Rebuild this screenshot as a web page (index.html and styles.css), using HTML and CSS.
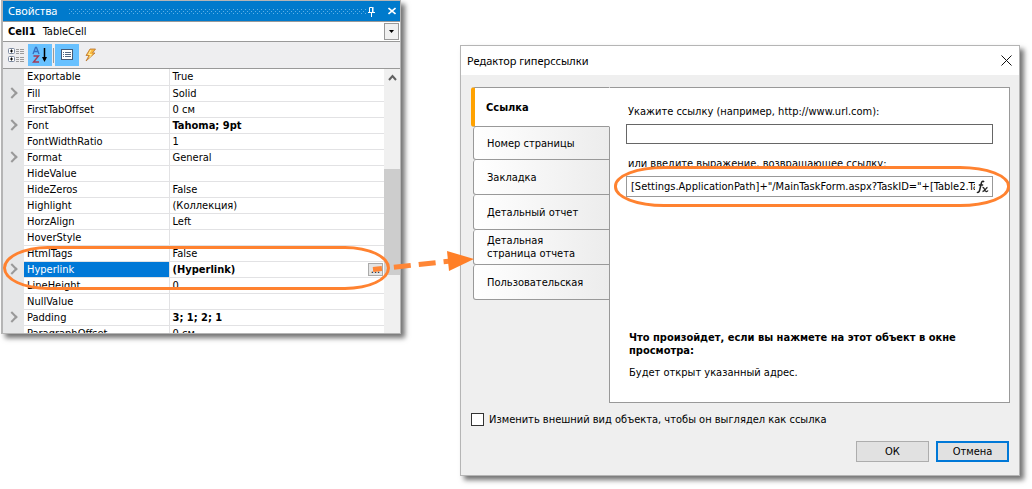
FILE: index.html
```html
<!DOCTYPE html>
<html lang="ru">
<head>
<meta charset="utf-8">
<title>Редактор гиперссылки</title>
<link rel="stylesheet" href="styles.css">
</head>
<body>
<main class="stage">
  <section class="window props">
    <header class="props-title">
      <h2 class="props-name">Свойства</h2>
      <span class="grip"></span>
      <button class="title-btn" aria-label="Закрепить"><svg width="9" height="11" viewBox="0 0 9 11"><path d="M2.500 6V1.500h3V6M6 1v5M1 6.500h7M4.500 7v4" fill="none" stroke="#fff"/></svg></button>
      <button class="title-btn" aria-label="Закрыть"><svg width="8" height="8" viewBox="0 0 8 8"><path d="M.5 1l7 6M7.500 1l-7 6" stroke="#fff" stroke-width="1.600"/></svg></button>
    </header>
    <button class="object-picker" aria-haspopup="listbox">
      <b>Cell1</b><span class="object-type">TableCell</span>
      <span class="drop"><svg width="5" height="3" viewBox="0 0 5 3"><path d="M0 0h5L2.500 3z"/></svg></span>
    </button>
    <div class="toolbar">
      <button class="tool" aria-label="По категориям"><svg width="18" height="18" viewBox="0 0 18 18" fill="none"><rect x="1.500" y="2.500" width="6" height="5" rx="1" fill="#fff" stroke="#7d8aa0"/><path d="M3 5h3M4.500 3.500v3" stroke="#000"/><rect x="1.500" y="10.500" width="6" height="5" rx="1" fill="#fff" stroke="#7d8aa0"/><path d="M3 13h3M4.500 11.500v3" stroke="#000"/><path d="M9 3.500h3M13 3.500h4M9 5.500h3M13 5.500h4M9 7.500h3M13 7.500h4M9 11.500h3M13 11.500h4M9 13.500h3M13 13.500h4M9 15.500h3M13 15.500h4" stroke="#9a9a9a"/></svg></button>
      <button class="tool on" aria-label="По алфавиту"><svg width="18" height="18" viewBox="0 0 18 18" fill="none"><path d="M2 8L4.500 1.500h1L8 8M3 5.500h4" stroke="#356fc0" stroke-width="1.300"/><path d="M2.500 10h5L2.500 16H8" stroke="#a33a55" stroke-width="1.400"/><path d="M13.500 2v12" stroke="#000" stroke-width="1.500"/><path d="M11 11h5l-2.500 5z" fill="#000"/></svg></button>
      <span class="tool-sep"></span>
      <button class="tool on" aria-label="Свойства"><svg width="16" height="16" viewBox="0 0 16 16"><rect x="2.500" y="2.500" width="11" height="10" fill="#fff" stroke="#465a75"/><path d="M4 5.500h1M6 5.500h6M4 7.500h1M6 7.500h6M4 9.500h1M6 9.500h6" stroke="#536984"/></svg></button>
      <button class="tool" aria-label="События"><svg width="16" height="16" viewBox="0 0 16 16"><path d="M7 2h5.500L9.500 6H12l-9 8 3-5.500H3z" fill="#f9b73e" stroke="#b97530" stroke-width=".8"/><path d="M8 3L5.500 7.500h3l-2 3" fill="none" stroke="#fff0a0"/></svg></button>
    </div>
    <div class="grid-view">
      <div class="grid-clip">
        <table class="grid">
          <colgroup><col class="c-mark"><col class="c-name"><col></colgroup>
          <tbody>
            <tr><td></td><th scope="row">Exportable</th><td>True</td></tr>
            <tr class="exp"><td></td><th scope="row">Fill</th><td>Solid</td></tr>
            <tr><td></td><th scope="row">FirstTabOffset</th><td>0 см</td></tr>
            <tr class="exp"><td></td><th scope="row">Font</th><td><b>Tahoma; 9pt</b></td></tr>
            <tr><td></td><th scope="row">FontWidthRatio</th><td>1</td></tr>
            <tr class="exp"><td></td><th scope="row">Format</th><td>General</td></tr>
            <tr><td></td><th scope="row">HideValue</th><td></td></tr>
            <tr><td></td><th scope="row">HideZeros</th><td>False</td></tr>
            <tr><td></td><th scope="row">Highlight</th><td>(Коллекция)</td></tr>
            <tr><td></td><th scope="row">HorzAlign</th><td>Left</td></tr>
            <tr><td></td><th scope="row">HoverStyle</th><td></td></tr>
            <tr><td></td><th scope="row">HtmlTags</th><td>False</td></tr>
            <tr class="exp selected"><td></td><th scope="row">Hyperlink</th><td><div class="edit-cell"><b>(Hyperlink)</b><button class="more">...</button></div></td></tr>
            <tr><td></td><th scope="row">LineHeight</th><td>0</td></tr>
            <tr><td></td><th scope="row">NullValue</th><td></td></tr>
            <tr class="exp"><td></td><th scope="row">Padding</th><td><b>3; 1; 2; 1</b></td></tr>
            <tr><td></td><th scope="row">ParagraphOffset</th><td>0 см</td></tr>
          </tbody>
        </table>
      </div>
      <div class="scrollbar"><svg width="9" height="7" viewBox="0 0 9 7"><path d="M1 6l3.500-4L8 6" fill="none" stroke="#606060" stroke-width="2"/></svg><span class="thumb"></span></div>
      <span class="ring ring-row"></span>
    </div>
    <svg class="arrow" width="104" height="28" viewBox="0 0 104 28"><path d="M2 20.500L80 12" stroke="#ff8636" stroke-width="5" stroke-dasharray="9 12 17 8 17 8 12"/><path d="M76 2l27 8-25 12z" fill="#ff7f27"/></svg>
  </section>

  <section class="window dialog">
    <header class="dialog-title">
      <h2 class="dialog-name">Редактор гиперссылки</h2>
      <button class="close" aria-label="Закрыть"><svg width="11" height="11" viewBox="0 0 11 11"><path d="M.5.5l10 10M10.500.5l-10 10" stroke="#111"/></svg></button>
    </header>
    <div class="dialog-body">
      <div class="pages">
        <nav class="tabs" role="tablist">
          <button class="tab active" role="tab" aria-selected="true">Ссылка</button>
          <button class="tab" role="tab">Номер страницы</button>
          <button class="tab" role="tab">Закладка</button>
          <button class="tab" role="tab">Детальный отчет</button>
          <button class="tab" role="tab">Детальная<br>страница отчета</button>
          <button class="tab" role="tab">Пользовательская</button>
        </nav>
        <div class="panel">
          <label class="label" for="url">Укажите ссылку (например, http://www.url.com):</label>
          <input class="url" id="url" type="text">
          <label class="label label-expr" for="expr">или введите выражение, возвращающее ссылку:</label>
          <div class="expr-box">
            <input class="expr" id="expr" type="text" value="[Settings.ApplicationPath]+&quot;/MainTaskForm.aspx?TaskID=&quot;+[Table2.TaskID]">
            <button class="fx" aria-label="Выражение"><svg width="13" height="14" viewBox="0 0 13 14" fill="none" stroke="#222"><path d="M8 2C6.500 0 5.500 2 5 4.500L3.700 10C3.300 12 2 13 1 12M2.800 5h4.400" stroke-width="1.500"/><path d="M6.500 7.500c2-.5 2 3.500 3.500 4 .8.200 1.500-.2 2-1M11.500 7.500c-1.500 0-2.500 4-5 4" stroke-width="1.300"/></svg></button>
            <span class="ring ring-expr"></span>
          </div>
          <h3 class="question">Что произойдет, если вы нажмете на этот объект в окне просмотра:</h3>
          <p class="answer">Будет открыт указанный адрес.</p>
        </div>
      </div>
      <label class="check"><input class="box" type="checkbox">Изменить внешний вид объекта, чтобы он выглядел как ссылка</label>
      <div class="actions">
        <button class="btn">ОК</button>
        <button class="btn primary">Отмена</button>
      </div>
    </div>
  </section>
</main>
</body>
</html>
```
FILE: styles.css
```css
* { box-sizing: border-box; }
body {
  margin: 0;
  background: #fff;
  color: #000;
  font: 11px/13px "DejaVu Sans Condensed", "Noto Sans", sans-serif;
}
h2, h3, p { margin: 0; }
button, input { font: inherit; color: inherit; margin: 0; padding: 0; border-radius: 0; }
button { background: none; border: 0; }
svg { display: block; flex: none; }

.stage {
  display: grid;
  grid-template-columns: 400fr 560fr;
  column-gap: 59px;
  align-items: start;
  padding: 0 12px 13px 1px;
}
.window {
  position: relative;
  border: 1px solid #b5b5b5;
  box-shadow: 4px 4px 5px rgba(0, 0, 0, .55);
}

/* Property inspector */
.props { background: #eeeef0; border-left-width: 2px; }
.props-title {
  display: flex;
  align-items: center;
  gap: 12px;
  height: 20px;
  padding: 0 4px 0 5px;
  background: #007acc;
  color: #fff;
}
.props-name { font: 11px/16px "Noto Sans", sans-serif; }
.grip {
  flex: 1;
  height: 5px;
  background-image: conic-gradient(#6db7e8 0 0), conic-gradient(#6db7e8 0 0), conic-gradient(#6db7e8 0 0);
  background-image:
    linear-gradient(90deg, #5fb0e6 1px, transparent 1px),
    linear-gradient(90deg, transparent 2px, #5fb0e6 2px, #5fb0e6 3px, transparent 3px),
    linear-gradient(90deg, #5fb0e6 1px, transparent 1px);
  background-size: 4px 1px;
  background-position: 0 0, 0 2px, 0 4px;
  background-repeat: repeat-x;
}
.title-btn { display: flex; }
.title-btn:nth-of-type(1) { margin-left: -12px; }
.object-picker {
  display: flex;
  align-items: center;
  width: 100%;
  height: 21px;
  padding: 0 1px 0 5px;
  background: #fff;
  border: solid #999;
  border-width: 1px 0;
}
.object-type { margin-left: 7px; }
.drop {
  display: grid;
  place-items: center;
  width: 15px;
  height: 17px;
  margin-left: auto;
  background: #f0f0f0;
  border: 1px solid #999;
}
.toolbar {
  display: flex;
  align-items: center;
  height: 26px;
  padding-left: 1px;
}
.tool {
  display: grid;
  place-items: center;
  width: 24px;
  height: 22px;
}
.tool.on { background: #68c1ff; }
.tool-sep { width: 1px; height: 15px; margin: 0 1px; background: #999; }
.grid-view {
  position: relative;
  display: flex;
  height: 265px;
  border-top: 1px solid #999;
  background: #fff;
}
.grid-clip { flex: 1; overflow: hidden; }
.grid { width: 100%; table-layout: fixed; border-collapse: collapse; }
.c-mark { width: 21px; }
.c-name { width: 145px; }
.grid th, .grid td {
  height: 16px;
  padding: 0 0 0 3px;
  border-bottom: 1px solid #e2e2e4;
  font-weight: normal;
  line-height: 15px;
  text-align: left;
  white-space: nowrap;
}
.grid th { border-right: 1px solid #e2e2e4; }
.grid td:first-child { background: #e6e7e8; border-bottom-color: #e6e7e8; }
.exp td:first-child::before {
  content: "";
  display: block;
  width: 6px;
  height: 6px;
  margin-left: 2px;
  border: solid #999;
  border-width: 2px 2px 0 0;
  transform: rotate(45deg);
}
.selected th { background: #0078d7; color: #fff; }
.edit-cell { display: flex; align-items: center; justify-content: space-between; padding-right: 1px; }
.more {
  width: 15px;
  height: 13px;
  line-height: 9px;
  background: #e4e4e4;
  border: 1px solid #aaa;
}
.scrollbar {
  display: flex;
  flex-direction: column;
  align-items: center;
  width: 16px;
  padding-top: 5px;
  background: #f0f0f0;
}
.thumb { width: 100%; height: 106px; margin-top: 88px; background: #cdcdcd; }

/* Callouts drawn over the windows */
.ring {
  position: absolute;
  border: 3px solid #ff8230;
  pointer-events: none;
}
.ring-row { left: 0; right: 10px; top: 177px; height: 44px; border-radius: 45px / 22px; }
.ring-expr { left: -13px; right: -18px; top: -11px; height: 41px; border-radius: 50px / 20px; }
.arrow { position: absolute; left: 100%; top: 248px; margin-left: -29px; z-index: 2; }

/* Hyperlink editor */
.dialog { margin-top: 45px; background: #efefef; }
.dialog-title {
  display: flex;
  align-items: center;
  justify-content: space-between;
  height: 29px;
  padding: 0 7px 0 6px;
  background: #fff;
}
.dialog-name { font: 11px/16px "Noto Sans", sans-serif; }
.close { display: flex; }
.dialog-body { padding: 12px 9px 13px 10px; }
.pages { display: grid; grid-template-columns: 138px 1fr; }
.tabs {
  position: relative;
  z-index: 1;
  display: flex;
  flex-direction: column;
  margin-right: -1px;
}
.tab {
  height: 35px;
  margin-left: 2px;
  padding-left: 13px;
  background: linear-gradient(90deg, #fff, #ececec);
  border: 1px solid #999;
  border-top: 0;
  border-radius: 3px 0 0 3px;
  text-align: left;
}
.tab.active {
  height: 40px;
  margin-left: 0;
  padding-left: 11px;
  background: #fff;
  border-top: 1px solid #999;
  border-left: 4px solid #ffa200;
  border-right-color: #fff;
  font-weight: bold;
}
.tab.active + .tab { height: 33px; }
.panel {
  display: flex;
  flex-direction: column;
  padding: 17px 16px 23px;
  background: #fff;
  border: 1px solid #999;
}
.label { margin-left: 2px; }
.url { height: 20px; margin-top: 6px; padding: 0 4px; border: 1px solid #666; }
.label-expr { margin-top: 13px; }
.expr-box {
  position: relative;
  display: flex;
  align-items: center;
  height: 21px;
  margin-top: 6px;
  padding: 0 3px 0 4px;
  border: 1px solid #999;
}
.expr { flex: 1; min-width: 0; border: 0; outline: 0; background: none; }
.fx { display: flex; margin-left: 1px; }
.question { margin: 134px 0 9px 3px; font-size: 11px; }
.answer { margin-left: 3px; }
.check { display: flex; align-items: center; gap: 5px; margin-top: 10px; }
.box {
  appearance: none;
  width: 13px;
  height: 13px;
  background: #fff;
  border: 1px solid #333;
}
.actions { display: flex; justify-content: flex-end; gap: 7px; margin-top: 15px; padding-right: 1px; }
.btn { width: 73px; height: 21px; background: #e1e1e1; border: 1px solid #adadad; }
.btn.primary { border: 2px solid #0078d7; }
```
